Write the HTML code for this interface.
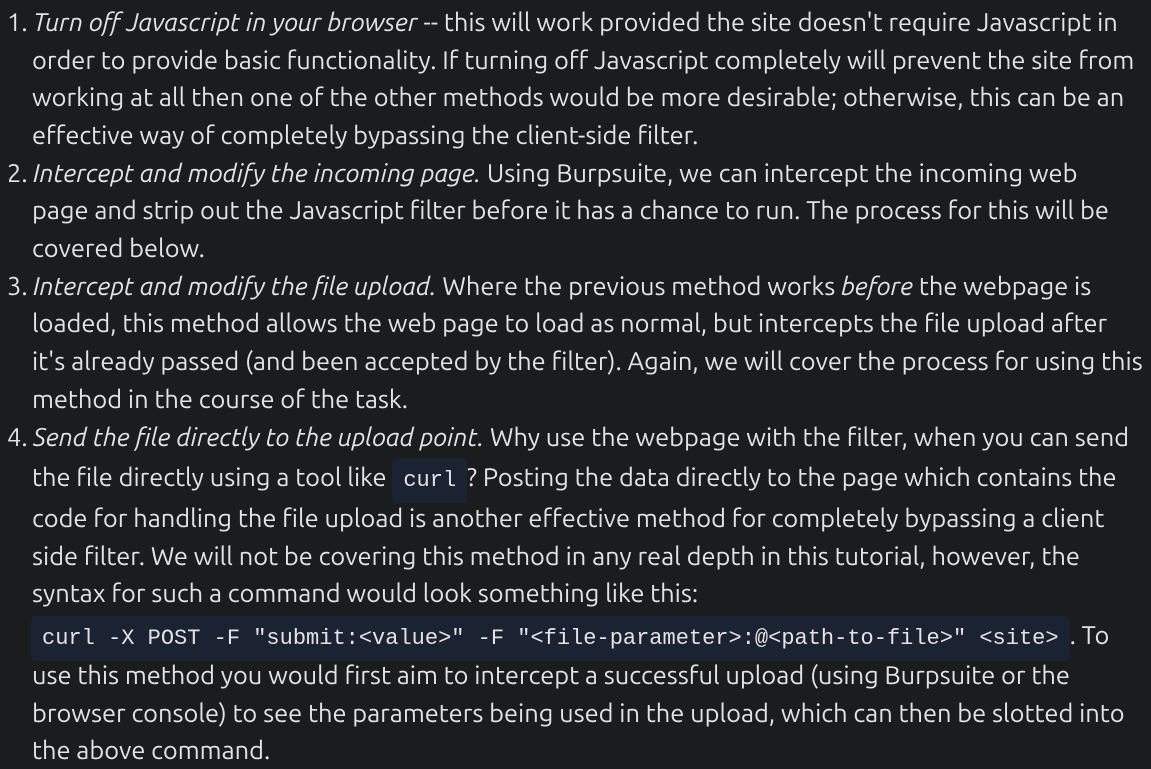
<!DOCTYPE html>
<html><head><meta charset="utf-8"><style>
html,body{margin:0;padding:0;background:#1b1c1e;width:1151px;height:768px;overflow:hidden}
body{font-family:"Ubuntu","Liberation Sans",sans-serif;font-size:25.4px;color:#e3e3e3}
.l{position:absolute;left:32px;height:38px;line-height:38px;white-space:nowrap}
.n{position:absolute;left:7px;height:38px;line-height:38px}
i{font-style:italic}
code{font-family:"Liberation Mono",monospace;font-size:22px;background:#1b2232;border-radius:4px;padding:10px 11px}
</style></head><body>
<div class="n" style="top:3px">1.</div>
<div class="l" style="top:3px;left:33px"><i>Turn off Javascript in your browser</i> -- this will work provided the site doesn't require Javascript in</div>
<div class="l" style="top:41px">order to provide basic functionality. If turning off Javascript completely will prevent the site from</div>
<div class="l" style="top:78px">working at all then one of the other methods would be more desirable; otherwise, this can be an</div>
<div class="l" style="top:116px">effective way of completely bypassing the client-side filter.</div>
<div class="n" style="top:154px">2.</div>
<div class="l" style="top:154px;left:33px"><i>Intercept and modify the incoming page.</i> Using Burpsuite, we can intercept the incoming web</div>
<div class="l" style="top:191px">page and strip out the Javascript filter before it has a chance to run. The process for this will be</div>
<div class="l" style="top:229px">covered below.</div>
<div class="n" style="top:267px">3.</div>
<div class="l" style="top:267px;left:33px"><i>Intercept and modify the file upload.</i> Where the previous method works <i>before</i> the webpage is</div>
<div class="l" style="top:304px">loaded, this method allows the web page to load as normal, but intercepts the file upload after</div>
<div class="l" style="top:342px">it's already passed (and been accepted by the filter). Again, we will cover the process for using this</div>
<div class="l" style="top:380px">method in the course of the task.</div>
<div class="n" style="top:418px">4.</div>
<div class="l" style="top:418px;left:33px"><i>Send the file directly to the upload point.</i> Why use the webpage with the filter, when you can send</div>
<div class="l" style="top:458px">the file directly using a tool like <code>curl</code>? Posting the data directly to the page which contains the</div>
<div class="l" style="top:499px">code for handling the file upload is another effective method for completely bypassing a client</div>
<div class="l" style="top:537px">side filter. We will not be covering this method in any real depth in this tutorial, however, the</div>
<div class="l" style="top:574px">syntax for such a command would look something like this:</div>
<div class="l" style="top:616px;left:31px"><code>curl -X POST -F "submit:&lt;value&gt;" -F "&lt;file-parameter&gt;:@&lt;path-to-file&gt;" &lt;site&gt;</code>. To</div>
<div class="l" style="top:656px">use this method you would first aim to intercept a successful upload (using Burpsuite or the</div>
<div class="l" style="top:694px">browser console) to see the parameters being used in the upload, which can then be slotted into</div>
<div class="l" style="top:731px">the above command.</div>
</body></html>
